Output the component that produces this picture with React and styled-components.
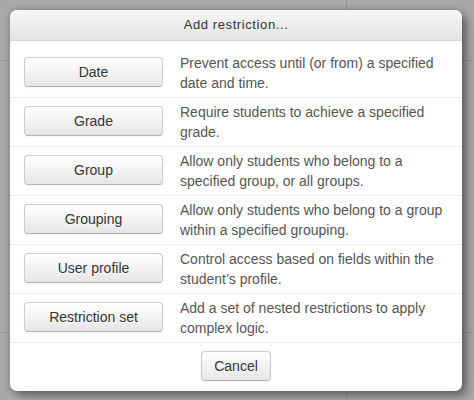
import React from 'react';
import styled, { createGlobalStyle } from 'styled-components';

const GlobalStyle = createGlobalStyle`
  html, body {
    margin: 0;
    padding: 0;
  }
  body {
    width: 474px;
    height: 400px;
    overflow: hidden;
    font-family: "Liberation Sans", Arial, sans-serif;
    /* dimmed page behind the modal, with its faint rules */
    background:
      linear-gradient(#979797, #979797) 0 60px / 474px 1px no-repeat,
      linear-gradient(#979797, #979797) 0 332px / 474px 1px no-repeat,
      linear-gradient(#979797, #979797) 346px 0 / 1px 400px no-repeat,
      #a9a9a9;
  }
`;

const Backdrop = styled.div`
  position: relative;
  width: 474px;
  height: 400px;
`;

const Dialog = styled.div`
  position: absolute;
  left: 10px;
  top: 10px;
  width: 452px;
  background: #fff;
  border-radius: 7px;
  box-shadow: 0 0 7px rgba(0, 0, 0, 0.22), 5px 5px 10px rgba(0, 0, 0, 0.38);
  overflow: hidden;
`;

const Header = styled.div`
  height: 30px;
  line-height: 30px;
  text-align: center;
  font-size: 13px;
  letter-spacing: 0.6px;
  color: #333;
  background: linear-gradient(#f7f7f7, #e3e3e3);
  border-bottom: 1px solid #d2d2d2;
`;

const Body = styled.div`
  padding-top: 8px;
`;

const Row = styled.div`
  display: grid;
  grid-template-columns: 139px 1fr;
  column-gap: 17px;
  align-items: start;
  padding: 4px 14px;
  border-bottom: 1px solid #eeeeee;
`;

const Button = styled.button`
  display: block;
  box-sizing: border-box;
  height: 30px;
  width: ${(p) => (p.$wide ? '139px' : 'auto')};
  margin-top: ${(p) => (p.$wide ? '4px' : '0')};
  padding: 4px 12px;
  font-family: "Liberation Sans", Arial, sans-serif;
  font-size: 14px;
  line-height: 20px;
  color: #333;
  text-shadow: 0 1px 1px rgba(255, 255, 255, 0.75);
  background: linear-gradient(#ffffff, #e6e6e6);
  border: 1px solid #cccccc;
  border-bottom-color: #b3b3b3;
  border-radius: 4px;
  box-shadow: inset 0 1px 0 rgba(255, 255, 255, 0.2), 0 1px 2px rgba(0, 0, 0, 0.05);
  cursor: pointer;
`;

const Description = styled.div`
  font-size: 14px;
  line-height: 20px;
  color: #555;
`;

const Footer = styled.div`
  display: flex;
  justify-content: center;
  padding: 8px 0 10px;
`;

const restrictions = [
  { label: 'Date', text: 'Prevent access until (or from) a specified date and time.' },
  { label: 'Grade', text: 'Require students to achieve a specified grade.' },
  { label: 'Group', text: 'Allow only students who belong to a specified group, or all groups.' },
  { label: 'Grouping', text: 'Allow only students who belong to a group within a specified grouping.' },
  { label: 'User profile', text: 'Control access based on fields within the student\u2019s profile.' },
  { label: 'Restriction set', text: 'Add a set of nested restrictions to apply complex logic.' },
];

const App = () => (
  <>
    <GlobalStyle />
    <Backdrop>
      <Dialog>
        <Header>Add restriction...</Header>
        <Body>
          {restrictions.map((r) => (
            <Row key={r.label}>
              <Button $wide>{r.label}</Button>
              <Description>{r.text}</Description>
            </Row>
          ))}
        </Body>
        <Footer>
          <Button>Cancel</Button>
        </Footer>
      </Dialog>
    </Backdrop>
  </>
);

export default App;
